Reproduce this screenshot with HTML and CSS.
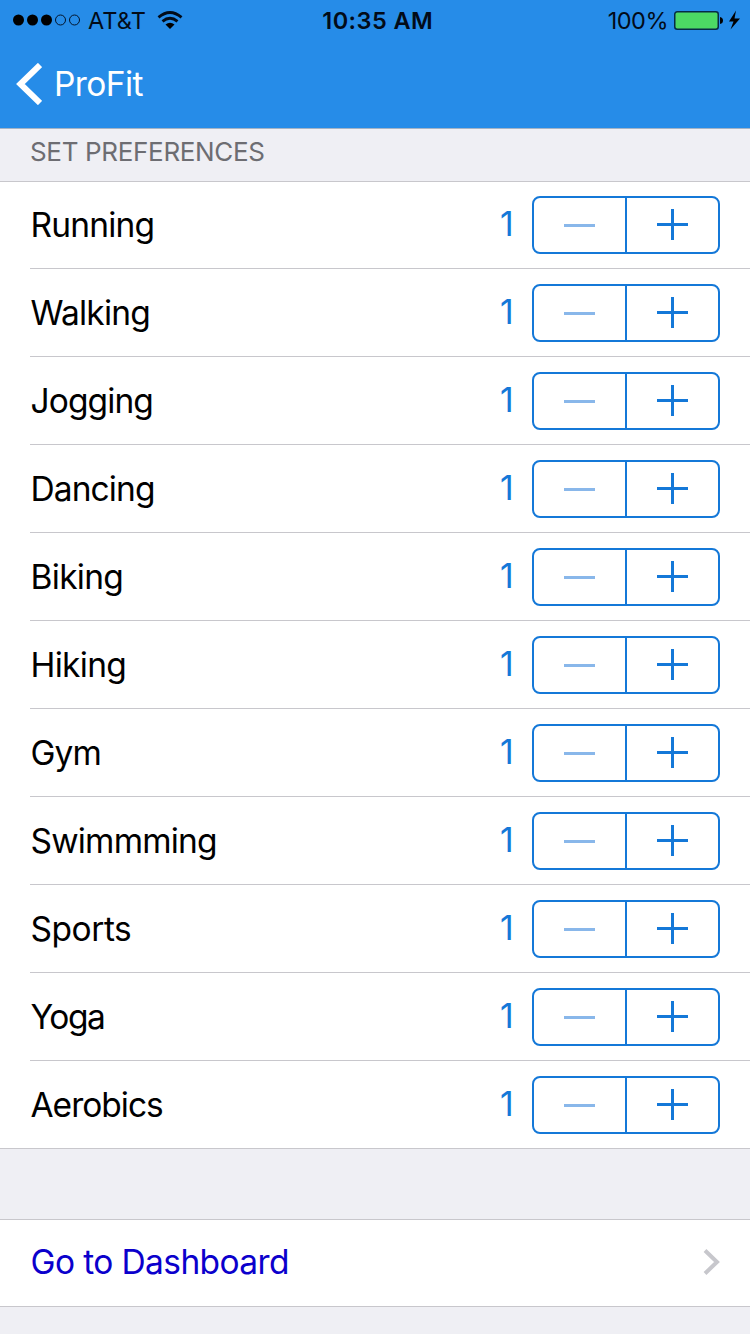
FILE: index.html
```html
<!DOCTYPE html>
<html lang="en">
<head>
<meta charset="utf-8">
<title>ProFit</title>
<link rel="stylesheet" href="styles.css">
</head>
<body>
<svg class="defs" aria-hidden="true">
  <symbol id="stepper" viewBox="0 0 188 58">
    <rect x="1" y="1" width="186" height="56" rx="7" fill="none" stroke="#1478d8" stroke-width="2"/>
    <path d="M94 1V57" stroke="#1478d8" stroke-width="2"/>
    <path d="M32 29.500H63" stroke="#89b7ea" stroke-width="3"/>
    <path d="M125 28.500H156M140.500 13V44" stroke="#1478d8" stroke-width="3"/>
  </symbol>
</svg>
<header class="top">
  <div class="status">
    <div class="status-left">
      <svg class="signal" width="68" height="12" viewBox="0 0 68 12">
        <circle cx="5.500" cy="6" r="5.500"/><circle cx="19.500" cy="6" r="5.500"/><circle cx="33.500" cy="6" r="5.500"/>
        <circle cx="47.500" cy="6" r="5" fill="none" stroke="#03152c"/><circle cx="61.500" cy="6" r="5" fill="none" stroke="#03152c"/>
      </svg>
      <span class="carrier">AT&amp;T</span>
      <svg class="wifi" width="26" height="19" viewBox="0 0 26 19">
        <path d="M1.500 6.400Q13 -3.400 24.500 6.400M5.500 10.400Q13 4.200 20.500 10.400" fill="none" stroke="#020b18" stroke-width="2.800"/>
        <path d="M8.500 13.500Q13 10.200 17.500 13.500L13 18Z"/>
      </svg>
    </div>
    <span class="time">10:35 AM</span>
    <div class="status-right">
      <span class="percent">100%</span>
      <svg class="battery" width="67" height="20" viewBox="0 0 67 20">
        <rect x=".75" y="1.750" width="43.500" height="17.500" rx="2.500" fill="#4cd964" stroke="#062b45" stroke-width="1.500"/>
        <path d="M46 7Q49 7.500 49 10.500T46 14Z"/>
        <path d="M62 .5L55 11.500H59.500L56.500 19.500L66 8.500H60.500Z"/>
      </svg>
    </div>
  </div>
  <nav class="nav">
    <svg width="26" height="42" viewBox="0 0 26 42"><path d="M24 2L4.400 21L24 40" fill="none" stroke="#fff" stroke-width="6"/></svg>
    <span class="back">ProFit</span>
  </nav>
</header>
<main>
  <h2 class="heading"><span>SET PREFERENCES</span></h2>
  <ul class="list">
    <li class="row"><span class="label running">Running</span><span class="value">1</span><svg class="stepper"><use href="#stepper"/></svg></li>
    <li class="row"><span class="label walking">Walking</span><span class="value">1</span><svg class="stepper"><use href="#stepper"/></svg></li>
    <li class="row"><span class="label jogging">Jogging</span><span class="value">1</span><svg class="stepper"><use href="#stepper"/></svg></li>
    <li class="row"><span class="label dancing">Dancing</span><span class="value">1</span><svg class="stepper"><use href="#stepper"/></svg></li>
    <li class="row"><span class="label biking">Biking</span><span class="value">1</span><svg class="stepper"><use href="#stepper"/></svg></li>
    <li class="row"><span class="label hiking">Hiking</span><span class="value">1</span><svg class="stepper"><use href="#stepper"/></svg></li>
    <li class="row"><span class="label gym">Gym</span><span class="value">1</span><svg class="stepper"><use href="#stepper"/></svg></li>
    <li class="row"><span class="label swimming">Swimmming</span><span class="value">1</span><svg class="stepper"><use href="#stepper"/></svg></li>
    <li class="row"><span class="label sports">Sports</span><span class="value">1</span><svg class="stepper"><use href="#stepper"/></svg></li>
    <li class="row"><span class="label yoga">Yoga</span><span class="value">1</span><svg class="stepper"><use href="#stepper"/></svg></li>
    <li class="row"><span class="label aerobics">Aerobics</span><span class="value">1</span><svg class="stepper"><use href="#stepper"/></svg></li>
  </ul>
  <a class="link"><span class="link-text">Go to Dashboard</span><svg width="17" height="26" viewBox="0 0 17 26"><path d="M2 1.500L14 13L2 24.500" fill="none" stroke="#c7c7cc" stroke-width="4"/></svg></a>
</main>
</body>
</html>
```
FILE: styles.css
```css
* { box-sizing: border-box; }
body {
  margin: 0;
  height: 1334px;
  overflow: hidden;
  background: #efeff4;
  color: #000;
  font-family: Inter, "Liberation Sans", sans-serif;
  font-size: 33.5px;
  line-height: 40px;
  white-space: nowrap;
}
svg { display: block; flex: none; }
.defs { position: absolute; width: 0; height: 0; }
.top { height: 129px; background: #268ce8; border-bottom: 1px solid #a3b3c6; }
.status {
  display: grid;
  grid-template-columns: 1fr auto 1fr;
  height: 40px;
  padding: 0 9px 0 13px;
  align-items: center;
  color: #020b18;
  font-size: 23.5px;
  line-height: 39px;
}
.status-left, .status-right { display: flex; align-items: center; }
.status-right { justify-content: flex-end; }
.carrier { margin-left: 7px; padding-top: 1px; letter-spacing: 0.1px; }
.wifi { margin-left: 11px; }
.time { padding: 1px 0 0 1.5px; font-weight: 600; letter-spacing: 0.45px; }
.percent { margin-right: 6px; padding-top: 1px; letter-spacing: -0.5px; }
.nav { display: flex; align-items: center; height: 88px; padding-left: 16px; color: #fff; }
.back { margin-left: 12px; letter-spacing: -0.6px; }
.heading {
  height: 52px;
  margin: 0;
  padding: 6px 30px 0;
  color: #6d6d72;
  font-size: 26px;
  font-weight: 400;
  line-height: 33px;
  letter-spacing: -0.33px;
}
.list { margin: 0; padding: 0 0 0 30px; list-style: none; background: #fff; border: solid #c8c7cc; border-width: 1px 0; }
.row { display: flex; align-items: center; height: 88px; padding-right: 30px; border-bottom: 1px solid #c8c7cc; }
.row:first-child, .row:last-child { height: 87px; }
.row:last-child { border-bottom: 0; }
.label { flex: 1; padding: 1px 0 0 0.5px; letter-spacing: -0.8px; }
.row:first-child .label { padding-top: 0; }
.biking, .hiking { letter-spacing: -0.7px; }
.dancing, .jogging, .gym { letter-spacing: -0.9px; }
.sports { letter-spacing: -0.45px; }
.yoga { letter-spacing: -1.4px; }
.aerobics { letter-spacing: -1px; }
.value { width: 32px; padding-bottom: 1px; color: #1478d8; }
.row:first-child .value { padding-bottom: 2px; }
.stepper { width: 188px; height: 58px; }
.link {
  display: flex;
  align-items: center;
  justify-content: space-between;
  height: 88px;
  margin-top: 70px;
  padding: 0 30px 2px;
  background: #fff;
  border: solid #c8c7cc;
  border-width: 1px 0;
  color: #0b00cc;
}
.link-text { padding-left: 0.5px; letter-spacing: -0.6px; }
```
